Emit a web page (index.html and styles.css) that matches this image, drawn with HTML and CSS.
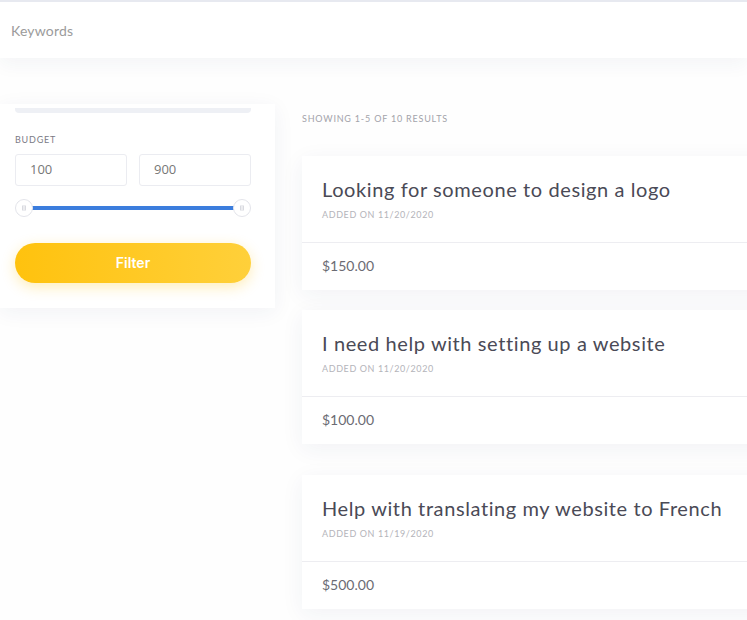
FILE: index.html
```html
<!DOCTYPE html>
<html lang="en">
<head>
    <meta charset="UTF-8">
    <meta name="viewport" content="width=device-width, initial-scale=1.0">
    <title>Jobs</title>
    <link rel="stylesheet" href="styles.css">
</head>
<body>
    <div class="search-bar">
        <input class="search-input" type="text" placeholder="Keywords">
    </div>
    <div class="main">
        <div class="sidebar">
            <div class="sidebar-top"></div>
            <div class="label">Budget</div>
            <div class="budget-inputs">
                <input class="budget-input" type="text" value="100">
                <input class="budget-input" type="text" value="900">
            </div>
            <div class="range">
                <div class="range-track"></div>
                <span class="thumb">
                    <svg width="18" height="18" viewBox="0 0 18 18"><circle cx="9" cy="9" r="8.5" fill="#fff" stroke="#e3e4ea"/><path d="M7.5 6.5v5M9 6v6M10.5 6.5v5" stroke="#cfd0d8" stroke-width="0.8"/></svg>
                </span>
                <span class="thumb">
                    <svg width="18" height="18" viewBox="0 0 18 18"><circle cx="9" cy="9" r="8.5" fill="#fff" stroke="#e3e4ea"/><path d="M7.5 6.5v5M9 6v6M10.5 6.5v5" stroke="#cfd0d8" stroke-width="0.8"/></svg>
                </span>
            </div>
            <button class="filter-btn">Filter</button>
        </div>
        <div class="results">
            <div class="results-count">Showing 1-5 of 10 results</div>
            <div class="job">
                <div class="job-head">
                    <h3 class="job-title">Looking for someone to design a logo</h3>
                    <div class="job-date">Added on 11/20/2020</div>
                </div>
                <div class="job-price">$150.00</div>
            </div>
            <div class="job">
                <div class="job-head">
                    <h3 class="job-title">I need help with setting up a website</h3>
                    <div class="job-date">Added on 11/20/2020</div>
                </div>
                <div class="job-price">$100.00</div>
            </div>
            <div class="job">
                <div class="job-head">
                    <h3 class="job-title">Help with translating my website to French</h3>
                    <div class="job-date">Added on 11/19/2020</div>
                </div>
                <div class="job-price">$500.00</div>
            </div>
        </div>
    </div>
</body>
</html>
```

FILE: styles.css
```css
body {
    margin: 0;
    background: #fefefe;
    font-family: Lato, "Open Sans", sans-serif;
    color: #4a4a56;
    overflow: hidden;
}
.search-bar {
    border-top: 2px solid #e7e9f0;
    background: #fff;
    height: 56px;
    display: flex;
    align-items: center;
    box-shadow: 0 6px 18px rgba(40, 50, 100, 0.05);
}
.search-input {
    border: none;
    outline: none;
    font-family: inherit;
    font-size: 14px;
    padding: 0 11px;
    width: 300px;
    color: #555;
    letter-spacing: 0.2px;
}
.search-input::placeholder {
    color: #9b9b9b;
}
.main {
    display: flex;
    gap: 27px;
    padding-top: 46px;
}
.sidebar {
    width: 236px;
    flex-shrink: 0;
    align-self: flex-start;
    background: #fff;
    padding: 4px 24px 25px 15px;
    box-shadow: 0 4px 20px rgba(40, 50, 100, 0.06);
}
.sidebar-top {
    height: 5px;
    background: #eef0f5;
    border-radius: 0 0 4px 4px;
}
.label {
    margin-top: 21px;
    font-size: 9px;
    line-height: 12px;
    letter-spacing: 0.8px;
    text-transform: uppercase;
    color: #7b7b85;
}
.budget-inputs {
    display: grid;
    grid-template-columns: 1fr 1fr;
    gap: 12px;
    margin-top: 8px;
}
.budget-input {
    box-sizing: border-box;
    width: 100%;
    height: 32px;
    border: 1px solid #ebecf1;
    border-radius: 3px;
    padding: 0 14px 3px;
    font-family: "Open Sans", sans-serif;
    font-size: 13px;
    color: #777;
    outline: none;
}
.range {
    position: relative;
    height: 20px;
    margin-top: 12px;
    display: flex;
    align-items: center;
    justify-content: space-between;
}
.range-track {
    position: absolute;
    left: 9px;
    right: 9px;
    top: 8px;
    height: 4px;
    background: #3b7ddd;
}
.thumb {
    position: relative;
    width: 18px;
    height: 18px;
    display: block;
}
.thumb svg {
    display: block;
}
.filter-btn {
    display: block;
    width: 100%;
    height: 40px;
    margin-top: 25px;
    padding-bottom: 3px;
    border: none;
    border-radius: 20px;
    background: linear-gradient(90deg, #ffc20e, #ffd03a);
    box-shadow: 0 4px 14px rgba(255, 196, 20, 0.3);
    color: #fff;
    font-family: Inter, sans-serif;
    font-size: 14px;
    font-weight: 600;
    cursor: pointer;
}
.results {
    width: 480px;
    flex-shrink: 0;
    padding-top: 8px;
}
.results-count {
    font-size: 9px;
    line-height: 14px;
    letter-spacing: 0.8px;
    text-transform: uppercase;
    color: #a3a3aa;
    margin-bottom: 30px;
}
.job {
    background: #fff;
    box-shadow: 0 5px 22px rgba(40, 50, 100, 0.06);
    margin-bottom: 20px;
}
.job:last-child {
    margin-top: 31px;
}
.job-head {
    padding: 21px 20px 22px;
    border-bottom: 1px solid #ededf1;
}
.job-title {
    margin: 0;
    font-size: 20px;
    line-height: 24px;
    font-weight: 400;
    letter-spacing: 0.6px;
    color: #4a4a56;
}
.job-date {
    margin-top: 8px;
    margin-bottom: -1px;
    font-size: 9px;
    line-height: 12px;
    letter-spacing: 0.6px;
    text-transform: uppercase;
    color: #b4b4ba;
}
.job-price {
    padding: 13px 20px 14px;
    font-size: 14px;
    line-height: 20px;
    color: #6b6b73;
}
```
